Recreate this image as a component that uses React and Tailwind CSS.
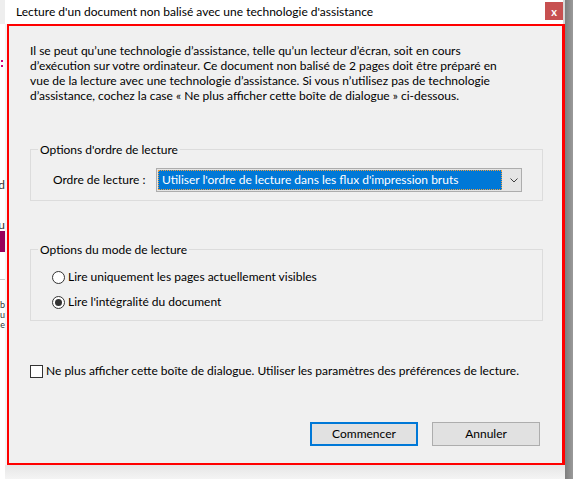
import React, { useState } from "react";

const bodyLines = [
  "Il se peut qu’une technologie d’assistance, telle qu’un lecteur d’écran, soit en cours",
  "d’exécution sur votre ordinateur. Ce document non balisé de 2 pages doit être préparé en",
  "vue de la lecture avec une technologie d’assistance. Si vous n’utilisez pas de technologie",
  "d’assistance, cochez la case « Ne plus afficher cette boîte de dialogue » ci-dessous.",
];

const Radio = ({ checked, label, onClick }) => (
  <div className="flex h-[20px] items-center cursor-default" onClick={onClick}>
    <div className="flex h-[13px] w-[13px] items-center justify-center rounded-full border border-[#333333] bg-white">
      {checked && <div className="h-[7px] w-[7px] rounded-full bg-[#333333]" />}
    </div>
    <span className="ml-[3px]">{label}</span>
  </div>
);

const App = () => {
  const [mode, setMode] = useState("all");
  const [noShow, setNoShow] = useState(false);

  return (
    <div
      className="flex h-[479px] w-[573px] overflow-hidden bg-[#f4f4f4] text-[12px] text-black"
      style={{ fontFamily: "Lato, 'Liberation Sans', sans-serif" }}
    >
      {/* page behind the dialog */}
      <div className="flex w-[5px] shrink-0 flex-col bg-white">
        <div className="h-[24px] bg-[#eeeeee]" />
        <div className="mt-[36px] h-[10px] w-[2px]">
          <div className="ml-[1px] h-[2px] w-[2px] bg-[#d0007a]" />
          <div className="ml-[1px] mt-[3px] h-[2px] w-[2px] bg-[#d0007a]" />
        </div>
        <div className="mt-[106px] flex h-[15px] justify-end overflow-hidden whitespace-nowrap text-[#333]">
          od
        </div>
        <div className="mt-[25px] flex h-[15px] justify-end overflow-hidden whitespace-nowrap text-[#333]">
          su
        </div>
        <div className="h-[21px] bg-[#98005a]" />
        <div className="mt-[27px] h-px bg-[#c8c8c8]" />
        <div className="mt-[20px] flex flex-col text-[9px] leading-[10px] text-[#333]">
          <div className="flex h-[10px] justify-end overflow-hidden whitespace-nowrap">mb</div>
          <div className="flex h-[10px] justify-end overflow-hidden whitespace-nowrap">ou</div>
          <div className="flex h-[10px] justify-end overflow-hidden whitespace-nowrap">me</div>
        </div>
      </div>

      {/* dialog */}
      <div className="flex w-[560px] shrink-0 flex-col">
        <div className="flex h-[24px] shrink-0">
          <div className="flex flex-1 items-start bg-white">
            <span className="ml-[11px] mt-[3px] text-[12px]">
              Lecture d'un document non balisé avec une technologie d'assistance
            </span>
            <button className="ml-auto mt-[2px] flex h-[18px] w-[18px] items-center justify-center bg-[#c75050] text-[11px] font-bold leading-none text-white">
              x
            </button>
          </div>
          <div className="w-[2px] bg-[#d8d8d8]" />
        </div>

        <div className="ml-[2px] flex h-[441px] flex-col border-2 border-r-[3px] border-[#ff0000] bg-[#f0f0f0] pl-[21px] pr-[19px]">
          <div className="pt-[17px] leading-[15px]">
            {bodyLines.map((line, i) => (
              <div key={i} className="whitespace-nowrap">
                {line}
              </div>
            ))}
          </div>

          <fieldset className="mt-[39px] border border-[#dcdcdc] pb-[8px] pt-[11px]">
            <legend className="ml-[7px] px-[2px] leading-[15px]">Options d'ordre de lecture</legend>
            <div className="flex items-center pl-[22px]">
              <span className="w-[103px]">Ordre de lecture :</span>
              <div className="flex h-[24px] w-[366px] items-center border border-[#adadad] bg-[#e5e5e5] pl-[1px]">
                <div className="flex h-[20px] w-[344px] items-center border border-dotted border-[#f0a040] bg-[#0078d7] pl-[3px] text-white">
                  Utiliser l'ordre de lecture dans les flux d'impression bruts
                </div>
                <svg className="ml-[8px]" width="8" height="5" viewBox="0 0 8 5">
                  <polyline points="0.5,0.5 4,4 7.5,0.5" fill="none" stroke="#404040" strokeWidth="1" />
                </svg>
              </div>
            </div>
          </fieldset>

          <fieldset className="mt-[41px] border border-[#dcdcdc] pb-[8px] pt-[10px]">
            <legend className="ml-[7px] px-[2px] leading-[15px]">Options du mode de lecture</legend>
            <div className="flex flex-col gap-[5px] pl-[21px]">
              <Radio
                checked={mode === "visible"}
                onClick={() => setMode("visible")}
                label="Lire uniquement les pages actuellement visibles"
              />
              <Radio
                checked={mode === "all"}
                onClick={() => setMode("all")}
                label="Lire l'intégralité du document"
              />
            </div>
          </fieldset>

          <div className="mt-[40px] flex h-[20px] items-center" onClick={() => setNoShow(!noShow)}>
            <div className="flex h-[13px] w-[13px] items-center justify-center border border-[#333333] bg-white text-[10px] leading-none">
              {noShow ? "✓" : ""}
            </div>
            <span className="ml-[3px]">
              Ne plus afficher cette boîte de dialogue. Utiliser les paramètres des préférences de lecture.
            </span>
          </div>

          <div className="mt-[41px] flex justify-end gap-[14px] pr-[3px]">
            <button className="h-[24px] w-[108px] border-2 border-[#0078d7] bg-[#e1e1e1]">Commencer</button>
            <button className="h-[24px] w-[108px] border border-[#adadad] bg-[#e1e1e1]">Annuler</button>
          </div>
        </div>
        <div className="flex-1 bg-gradient-to-b from-[#e6e6e6] to-[#f4f4f4]" />
      </div>

      <div className="flex-1 bg-gradient-to-r from-[#7e7e7e] to-[#9a9a9a]" />
    </div>
  );
};

export default App;
